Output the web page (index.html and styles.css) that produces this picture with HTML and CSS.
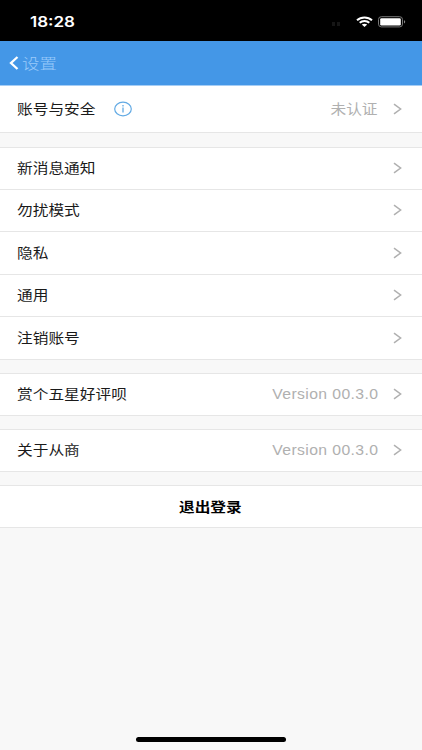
FILE: index.html
```html
<!DOCTYPE html>
<html lang="zh-CN">
<head>
<meta charset="utf-8">
<title>设置</title>
<link rel="stylesheet" href="styles.css">
</head>
<body>
<div class="screen">
  <div class="status">
    <span class="time">18:28</span>
    <span class="signal"><i></i><i></i></span>
    <svg class="wifi" width="17" height="12" viewBox="0 0 17 12"><path d="M1 4.3C5 .5 12 .5 16 4.3M3.7 6.8c2.6-2.5 7-2.5 9.6 0" fill="none" stroke="#fff" stroke-width="1.9"/><path d="M5.8 8.6c1.5-1.3 3.9-1.3 5.4 0L8.5 11z" fill="#fff"/></svg>
    <svg class="battery" width="28" height="12" viewBox="0 0 28 12"><rect x=".5" y=".7" width="24" height="10.2" rx="2.8" fill="none" stroke="#777"/><rect x="2.2" y="2.2" width="20.6" height="7.2" rx="1.2" fill="#fff"/><path d="M26 4.2c1.6.4 1.6 2.8 0 3.2z" fill="#888"/></svg>
  </div>
  <div class="nav">
    <svg class="back" width="10" height="14" viewBox="0 0 10 14"><path d="M8.5 1 2 7l6.5 6" fill="none" stroke="#fff" stroke-width="2.3"/></svg>
    <span class="nav-title">设置</span>
  </div>
  <div class="group first">
    <div class="row tall"><span class="label">账号与安全</span>
      <svg class="info" width="18" height="16" viewBox="0 0 18 16"><ellipse cx="9" cy="8" rx="8.3" ry="6.8" fill="none" stroke="#62aae4" stroke-width="1.2"/><path d="M9 6.6v5M9 4v1.5" stroke="#62aae4" stroke-width="1.3"/></svg>
      <span class="value cjk">未认证</span><svg class="chev" width="9" height="12" viewBox="0 0 9 12"><path d="M1 1.2 7.6 6 1 10.8"/></svg></div>
  </div>
  <div class="group">
    <div class="row"><span class="label">新消息通知</span><svg class="chev" width="9" height="12" viewBox="0 0 9 12"><path d="M1 1.2 7.6 6 1 10.8"/></svg></div>
    <div class="row"><span class="label">勿扰模式</span><svg class="chev" width="9" height="12" viewBox="0 0 9 12"><path d="M1 1.2 7.6 6 1 10.8"/></svg></div>
    <div class="row plus"><span class="label">隐私</span><svg class="chev" width="9" height="12" viewBox="0 0 9 12"><path d="M1 1.2 7.6 6 1 10.8"/></svg></div>
    <div class="row"><span class="label">通用</span><svg class="chev" width="9" height="12" viewBox="0 0 9 12"><path d="M1 1.2 7.6 6 1 10.8"/></svg></div>
    <div class="row plus"><span class="label">注销账号</span><svg class="chev" width="9" height="12" viewBox="0 0 9 12"><path d="M1 1.2 7.6 6 1 10.8"/></svg></div>
  </div>
  <div class="group">
    <div class="row"><span class="label">赏个五星好评呗</span><span class="value">Version 00.3.0</span><svg class="chev" width="9" height="12" viewBox="0 0 9 12"><path d="M1 1.2 7.6 6 1 10.8"/></svg></div>
  </div>
  <div class="group">
    <div class="row"><span class="label">关于从商</span><span class="value">Version 00.3.0</span><svg class="chev" width="9" height="12" viewBox="0 0 9 12"><path d="M1 1.2 7.6 6 1 10.8"/></svg></div>
  </div>
  <div class="group">
    <div class="row logout"><span class="exit">退出登录</span></div>
  </div>
  <div class="home"></div>
</div>
</body>
</html>
```
FILE: styles.css
```css
* { box-sizing: border-box; }
body { margin: 0; }
.screen {
  width: 422px;
  height: 750px;
  display: flex;
  flex-direction: column;
  background: #f8f8f8;
  color: #1a1a1a;
  font-family: "Liberation Sans", "Noto Sans CJK SC", sans-serif;
  overflow: hidden;
}
.status {
  height: 41px;
  flex: none;
  display: flex;
  align-items: center;
  padding: 2px 16px 0 30px;
  background: #000;
}
.time {
  color: #fff;
  font: 600 14.3px/20px Inter, sans-serif;
  transform: scaleX(1.19);
  transform-origin: left;
}
.signal { display: flex; gap: 2px; margin-left: auto; margin-right: 16px; padding-top: 4px; }
.signal i { width: 3px; height: 4px; background: #161616; }
.battery { margin-left: 5px; }
.nav {
  height: 45px;
  flex: none;
  display: flex;
  align-items: center;
  padding-left: 9px;
  padding-bottom: 1px;
  background: #4497e7;
  border-bottom: 1px solid #a5cdf5;
}
.nav-title {
  margin-left: 3px;
  color: #9bcafa;
  font: 300 14.5px/20px "Noto Sans CJK SC", sans-serif;
  transform: scaleX(1.2);
  transform-origin: left;
}
.group {
  flex: none;
  margin-bottom: 13px;
  background: #fff;
  border-top: 1px solid #e6e6e6;
}
.first { border-top: 0; margin-bottom: 14px; }
.row {
  height: 42px;
  display: flex;
  align-items: center;
  padding: 0 20px 1px 17px;
  border-bottom: 1px solid #e6e6e6;
}
.plus { height: 43px; padding-bottom: 0; }
.tall { height: 47px; padding-bottom: 0; }
.label {
  font: 400 13.2px/20px "Noto Sans CJK SC", sans-serif;
  transform: scaleX(1.19);
  transform-origin: left;
}
.info { margin-left: 31px; }
.value {
  margin-left: auto;
  color: #b0b0b0;
  font-size: 14px;
  letter-spacing: .35px;
  transform: scaleX(1.125);
  transform-origin: right;
}
.cjk { font: 400 13.2px/20px "Noto Sans CJK SC", sans-serif; letter-spacing: 0; transform: scaleX(1.19); }
.chev { margin-left: auto; fill: none; stroke: #b0b0b0; stroke-width: 1.5; }
.value + .chev { margin-left: 15px; }
.logout { justify-content: center; padding: 0 1px 0 0; }
.exit {
  color: #000;
  font: 700 13.2px/20px "Noto Sans CJK SC", sans-serif;
  transform: scaleX(1.19);
}
.home {
  flex: none;
  width: 150px;
  height: 5px;
  margin: auto auto 8px;
  border-radius: 3px;
  background: #000;
}
```
